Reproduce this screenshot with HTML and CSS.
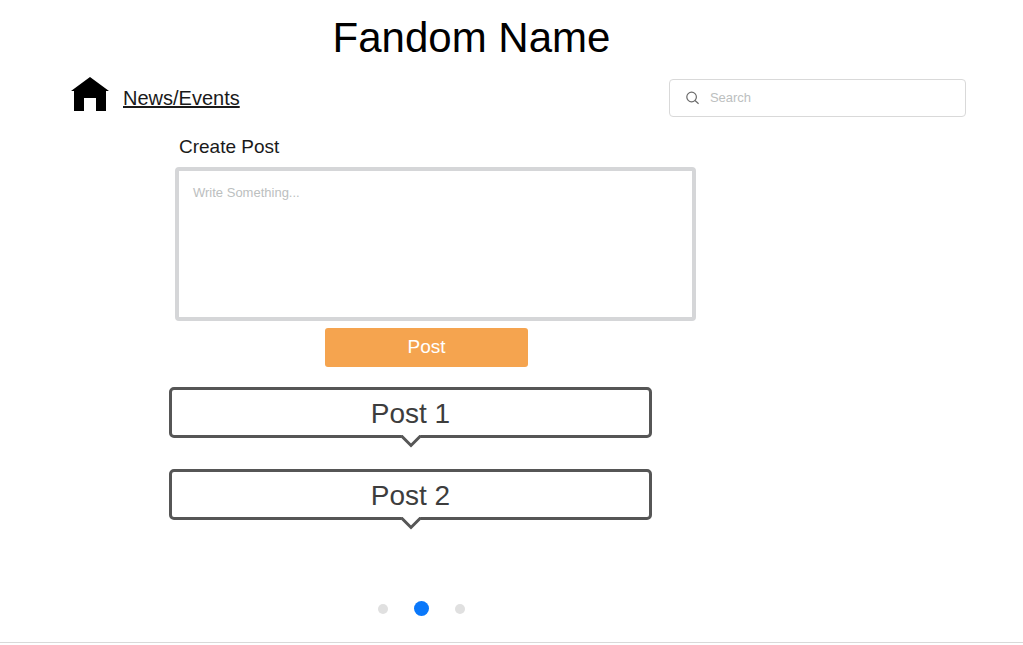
FILE: index.html
```html
<!DOCTYPE html>
<html lang="en">
<head>
<meta charset="utf-8">
<meta name="viewport" content="width=device-width, initial-scale=1">
<title>Fandom Name</title>
<link rel="stylesheet" href="styles.css">
</head>
<body>
<div class="page">
  <h1 class="title">Fandom Name</h1>
  <header class="toolbar">
    <nav class="nav">
      <a class="home" href="#" aria-label="Home">
        <svg width="38" height="34" viewBox="0 0 38 34" aria-hidden="true"><path d="M19 0 38 14H35V34H25V21H13V34H3V14H0Z"/></svg>
      </a>
      <a class="news" href="#">News/Events</a>
    </nav>
    <label class="search">
      <svg width="14" height="14" viewBox="0 0 14 14" fill="none" stroke="#6b6b6b" stroke-width="1.2" aria-hidden="true"><circle cx="5.6" cy="6" r="4.8"/><path d="m9 9.5 3.6 3.2"/></svg>
      <input class="search-input" type="text" placeholder="Search" aria-label="Search">
    </label>
  </header>
  <main>
    <form class="composer">
      <label class="composer-label" for="post-text">Create Post</label>
      <textarea class="composer-text" id="post-text" placeholder="Write Something..."></textarea>
      <div class="composer-actions"><button class="submit" type="button">Post</button></div>
    </form>
    <section class="posts" aria-label="Posts">
      <article class="post">Post 1
        <svg class="notch" width="24" height="14" viewBox="0 0 24 14" aria-hidden="true"><path class="notch-fill" d="M2 0H22V2L12 12 2 2Z"/><path class="notch-line" d="M2 0.5 12 10.5 22 0.5"/></svg>
      </article>
      <article class="post">Post 2
        <svg class="notch" width="24" height="14" viewBox="0 0 24 14" aria-hidden="true"><path class="notch-fill" d="M2 0H22V2L12 12 2 2Z"/><path class="notch-line" d="M2 0.5 12 10.5 22 0.5"/></svg>
      </article>
    </section>
  </main>
  <footer class="footer">
    <nav class="pager" aria-label="Pages">
      <button class="dot" type="button" aria-label="Page 1"></button>
      <button class="dot dot-active" type="button" aria-label="Page 2" aria-current="page"></button>
      <button class="dot" type="button" aria-label="Page 3"></button>
    </nav>
  </footer>
</div>
</body>
</html>
```

FILE: styles.css
```css
* {
  box-sizing: border-box;
}

body {
  margin: 0;
  background: #fff;
  color: #000;
  font-family: "Liberation Sans", Arial, sans-serif;
}

.page {
  padding-top: 14px;
}

.title {
  margin: 0;
  padding-right: 80px;
  font-size: 42px;
  font-weight: 400;
  line-height: 48px;
  text-align: center;
}

.toolbar {
  display: flex;
  align-items: center;
  justify-content: space-between;
  margin-top: 15px;
  padding: 0 57px 0 71px;
}

.nav {
  display: flex;
  align-items: center;
  gap: 14px;
}

.home {
  display: block;
  padding-bottom: 8px;
}

.home svg {
  display: block;
}

.news {
  color: #1a1a1a;
  font-size: 20px;
  line-height: 24px;
  text-decoration-thickness: 2px;
}

.search {
  display: flex;
  align-items: center;
  gap: 10px;
  width: 33.2%;
  height: 38px;
  padding: 0 16px;
  border: 1px solid #d9d9d9;
  border-radius: 4px;
}

.search-input {
  flex: 1;
  min-width: 0;
  padding: 0;
  border: 0;
  outline: 0;
  background: none;
  font: 13px/16px "Liberation Sans", Arial, sans-serif;
}

.search-input::placeholder,
.composer-text::placeholder {
  color: #bcc0c0;
  opacity: 1;
}

.composer {
  display: grid;
  grid-template-columns: 175fr 521fr 327fr;
  margin-top: 17px;
}

.composer-label {
  grid-column: 2;
  padding-left: 4px;
  color: #1a1a1a;
  font-size: 19px;
  line-height: 22px;
}

.composer-text {
  grid-column: 2;
  width: 100%;
  height: 154px;
  margin-top: 9px;
  padding: 14px;
  border: 4px solid #d5d6d8;
  border-radius: 4px;
  outline: 0;
  resize: none;
  font: 13px/16px "Liberation Sans", Arial, sans-serif;
}

.composer-actions {
  display: grid;
  grid-column: 1 / -1;
  grid-template-columns: 325fr 203fr 495fr;
  margin-top: 7px;
}

.submit {
  grid-column: 2;
  height: 39px;
  padding: 0 0 2px;
  border: 0;
  border-radius: 3px;
  background: #f5a44f;
  color: #fff;
  font: 19px/22px "Liberation Sans", Arial, sans-serif;
}

.posts {
  display: grid;
  grid-template-columns: 169fr 483fr 371fr;
  row-gap: 31px;
  margin-top: 20px;
}

.post {
  position: relative;
  grid-column: 2;
  padding: 9px 0 6px;
  border: 3px solid #565656;
  border-radius: 5px;
  color: #3d3d3d;
  font-size: 28px;
  line-height: 30px;
  text-align: center;
}

.notch {
  position: absolute;
  top: 100%;
  left: calc(50% - 12px);
}

.notch-fill {
  fill: #fff;
}

.notch-line {
  fill: none;
  stroke: #565656;
  stroke-width: 3;
}

.footer {
  padding: 81px 180px 26px 0;
  border-bottom: 1px solid #d9d9d9;
}

.pager {
  display: flex;
  align-items: center;
  justify-content: center;
  gap: 26px;
}

.dot {
  width: 10px;
  height: 10px;
  padding: 0;
  border: 0;
  border-radius: 50%;
  background: #e0e0e0;
}

.dot-active {
  width: 15px;
  height: 15px;
  background: #0a78fa;
}
```
